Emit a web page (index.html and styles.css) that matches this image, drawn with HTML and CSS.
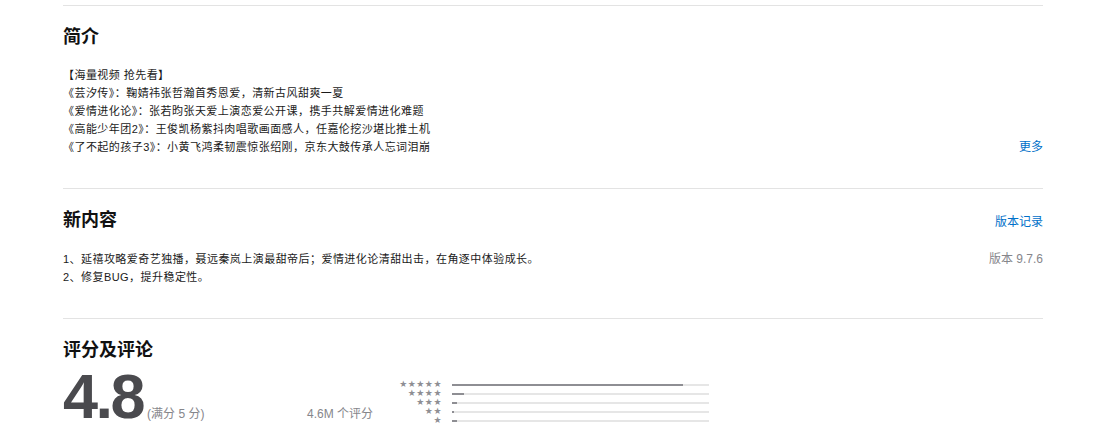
FILE: index.html
```html
<!DOCTYPE html>
<html lang="zh-CN">
<head>
<meta charset="utf-8">
<title>App</title>
<link rel="stylesheet" href="styles.css">
</head>
<body>
<div class="page">
  <section class="sec">
    <h2 class="sec-title">简介</h2>
    <div class="body-row">
      <div class="text">
        <p>【海量视频 抢先看】</p>
        <p>《芸汐传》：鞠婧祎张哲瀚首秀恩爱，清新古风甜爽一夏</p>
        <p>《爱情进化论》：张若昀张天爱上演恋爱公开课，携手共解爱情进化难题</p>
        <p>《高能少年团2》：王俊凯杨紫抖肉唱歌画面感人，任嘉伦挖沙堪比推土机</p>
        <p>《了不起的孩子3》：小黄飞鸿柔韧震惊张绍刚，京东大鼓传承人忘词泪崩</p>
      </div>
      <a class="link more">更多</a>
    </div>
  </section>

  <section class="sec">
    <div class="sec-head">
      <h2 class="sec-title">新内容</h2>
      <a class="link">版本记录</a>
    </div>
    <div class="body-row">
      <div class="text">
        <p>1、延禧攻略爱奇艺独播，聂远秦岚上演最甜帝后；爱情进化论清甜出击，在角逐中体验成长。</p>
        <p>2、修复BUG，提升稳定性。</p>
      </div>
      <span class="version">版本 9.7.6</span>
    </div>
  </section>

  <section class="sec">
    <h2 class="sec-title">评分及评论</h2>
    <div class="ratings">
      <div class="score">
        <span class="score-num">4.8</span>
        <span class="score-out">(满分 5 分)</span>
      </div>
      <div class="count">4.6M 个评分</div>
      <div class="hist">
        <div class="hist-row"><span class="stars">★★★★★</span><span class="bar"><span class="fill" style="width:90%"></span></span></div>
        <div class="hist-row"><span class="stars">★★★★</span><span class="bar"><span class="fill" style="width:4.5%"></span></span></div>
        <div class="hist-row"><span class="stars">★★★</span><span class="bar"><span class="fill" style="width:2%"></span></span></div>
        <div class="hist-row"><span class="stars">★★</span><span class="bar"><span class="fill" style="width:0.6%"></span></span></div>
        <div class="hist-row"><span class="stars">★</span><span class="bar"><span class="fill" style="width:2%"></span></span></div>
      </div>
    </div>
  </section>
</div>
</body>
</html>
```

FILE: styles.css
```css
html, body {
  margin: 0;
  padding: 0;
  background: #ffffff;
}

body {
  font-family: "Liberation Sans", "Noto Sans CJK SC", sans-serif;
  color: #1d1d1f;
}

.page {
  width: 980px;
  margin-left: 63px;
  padding-top: 5px;
}

.sec {
  border-top: 1px solid #e3e3e3;
  padding: 17px 0 32px;
}

.sec-title {
  margin: 0;
  font-family: "Noto Sans CJK SC", sans-serif;
  font-size: 18px;
  font-weight: 700;
  line-height: 24px;
  color: #111111;
}

.sec-head {
  display: flex;
  justify-content: space-between;
  align-items: baseline;
}

.body-row {
  display: flex;
  justify-content: space-between;
  margin-top: 19px;
}

.text p {
  margin: 0;
  font-size: 11px;
  line-height: 18px;
  letter-spacing: 0.45px;
  color: #1a1a1a;
}

.link {
  font-size: 12px;
  line-height: 18px;
  color: #0070c9;
  text-decoration: none;
}

.more {
  align-self: flex-end;
}

.version {
  font-size: 12px;
  line-height: 18px;
  color: #86868b;
}

.ratings {
  display: flex;
  align-items: baseline;
  margin-top: 5px;
}

.score {
  width: 244px;
  display: flex;
  align-items: baseline;
}

.score-num {
  font-family: "Liberation Sans", sans-serif;
  font-size: 63px;
  font-weight: 700;
  line-height: 63px;
  letter-spacing: -2.5px;
  color: #4a4a4e;
}

.score-out {
  margin-left: 4px;
  font-size: 12px;
  color: #86868b;
}

.count {
  width: 84px;
  font-size: 12px;
  color: #86868b;
}

.hist {
  align-self: flex-start;
  margin-top: 15px;
  display: flex;
  flex-direction: column;
}

.hist-row {
  display: flex;
  align-items: center;
  height: 9px;
}

.stars {
  width: 51px;
  padding-right: 10px;
  text-align: right;
  font-family: "DejaVu Sans", sans-serif;
  font-size: 9px;
  line-height: 9px;
  letter-spacing: 0.5px;
  color: #8e8e93;
}

.bar {
  display: block;
  width: 257px;
  height: 2px;
  background: #e6e6e6;
}

.fill {
  display: block;
  height: 2px;
  background: #8e8e93;
}
```
